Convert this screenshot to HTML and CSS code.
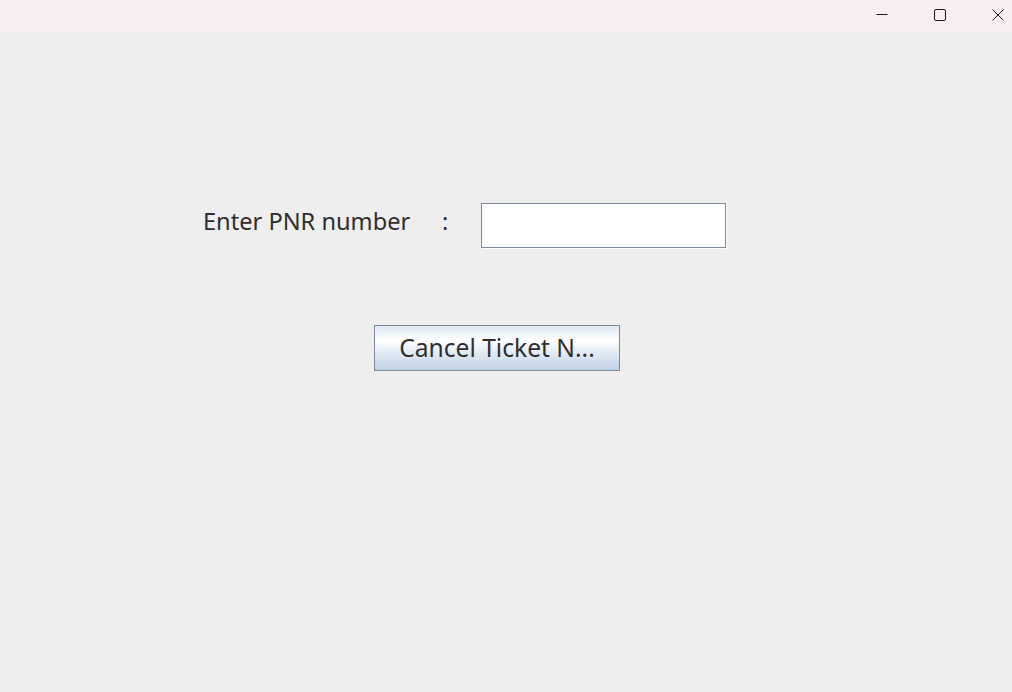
FILE: index.html
```html
<!DOCTYPE html>
<html>
<head>
<meta charset="utf-8">
<link rel="stylesheet" href="styles.css">
</head>
<body>
<div class="titlebar">
  <span class="ctl">
    <svg width="12" height="12" viewBox="0 0 12 12"><path d="M0.5 5.5 H11.5" stroke="#1a1a1a" stroke-width="1" fill="none"/></svg>
  </span>
  <span class="ctl">
    <svg width="12" height="12" viewBox="0 0 12 12"><rect x="0.5" y="0.5" width="11" height="11" rx="1.5" stroke="#1a1a1a" stroke-width="1" fill="none"/></svg>
  </span>
  <span class="ctl">
    <svg width="12" height="12" viewBox="0 0 12 12"><path d="M0.5 0.5 L11.5 11.5 M11.5 0.5 L0.5 11.5" stroke="#1a1a1a" stroke-width="1" fill="none"/></svg>
  </span>
</div>
<div class="content">
  <div class="row">
    <span class="label">Enter PNR number</span>
    <span class="colon">:</span>
    <input class="field" type="text">
  </div>
  <div class="actions">
    <button class="btn">Cancel Ticket N...</button>
  </div>
</div>
</body>
</html>
```
FILE: styles.css
```css
html, body {
  margin: 0;
  padding: 0;
  height: 100%;
}
body {
  background: #eeeeee;
  font-family: "Noto Sans", "DejaVu Sans", sans-serif;
  color: #2e2e2e;
  overflow: hidden;
}
.titlebar {
  height: 33px;
  background: #f9eff0;
  display: flex;
  justify-content: flex-end;
  align-items: flex-start;
  gap: 46px;
  padding-right: 8px;
  box-sizing: border-box;
}
.ctl {
  display: flex;
  padding-top: 9px;
}
.ctl svg {
  display: block;
}
.content {
  padding: 170px 0 0 203px;
}
.row {
  display: flex;
  align-items: center;
  height: 45px;
}
.label {
  font-size: 23.6px;
  width: 239px;
  line-height: 1;
  padding-bottom: 8px;
}
.colon {
  font-size: 23.6px;
  width: 39px;
  line-height: 1;
  padding-bottom: 8px;
}
.field {
  width: 245px;
  height: 45px;
  box-sizing: border-box;
  border: 1px solid #7a8a99;
  background: #ffffff;
  box-shadow: 1px 1px 0 #ffffff;
  margin: 0;
  padding: 0 4px;
  outline: none;
  font: inherit;
}
.actions {
  padding: 77px 0 0 171px;
}
.btn {
  width: 246px;
  height: 46px;
  box-sizing: border-box;
  margin: 0;
  padding: 0;
  border: 1px solid #7a8a99;
  border-radius: 0;
  background: linear-gradient(to bottom, #dce7f3 0%, #ffffff 33%, #e2ebf5 60%, #bed2e7 100%);
  font-family: "Noto Sans", "DejaVu Sans", sans-serif;
  font-size: 24.6px;
  color: #2e2e2e;
  line-height: 1;
  padding-top: 1px;
}
```
